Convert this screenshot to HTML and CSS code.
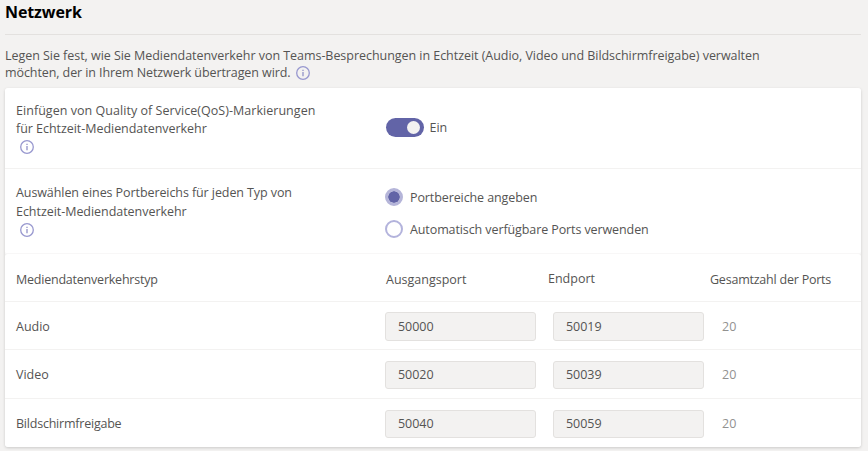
FILE: index.html
```html
<!DOCTYPE html>
<html lang="de">
<head>
<meta charset="utf-8">
<title>Netzwerk</title>
<link rel="stylesheet" href="styles.css">
</head>
<body>
<svg class="defs" width="0" height="0" aria-hidden="true">
  <symbol id="info" viewBox="0 0 14 14">
    <circle cx="7" cy="7" r="6.3" fill="none" stroke="#9898cf" stroke-width="1.3"/>
    <path d="M7 6.1v4.2M7 3.7v1.4" stroke="#9292c8" stroke-width="1.3"/>
  </symbol>
</svg>
<main class="page">
  <h1 class="title">Netzwerk</h1>
  <p class="intro"><span class="intro-first">Legen Sie fest, wie Sie Mediendatenverkehr von Teams-Besprechungen in Echtzeit (Audio, Video und Bildschirmfreigabe) verwalten</span><br><span class="snug">möchten, der in Ihrem Netzwerk übertragen wird.</span><svg class="info info-inline"><use href="#info"/></svg></p>
  <div class="cards">
    <section class="card">
      <div class="setting qos">
        <div class="label"><span class="loose">Einfügen von Quality of Service(QoS)-Markierungen</span><br><span class="intro-first">für Echtzeit-Mediendatenverkehr</span><svg class="info"><use href="#info"/></svg></div>
        <div class="switch-line"><span class="switch"><span class="knob"></span></span><span>Ein</span></div>
      </div>
      <div class="setting ports">
        <div class="label"><span class="snug">Auswählen eines Portbereichs für jeden Typ von</span><br><span class="intro-first">Echtzeit-Mediendatenverkehr</span><svg class="info"><use href="#info"/></svg></div>
        <div class="radios">
          <div class="radio"><span class="dot checked"></span><span>Portbereiche angeben</span></div>
          <div class="radio"><span class="dot"></span><span>Automatisch verfügbare Ports verwenden</span></div>
        </div>
      </div>
    </section>
    <section class="card table">
      <div class="row head"><span class="tight">Mediendatenverkehrstyp</span><span>Ausgangsport</span><span class="end">Endport</span><span class="tight">Gesamtzahl der Ports</span></div>
      <div class="row"><span>Audio</span><span class="field">50000</span><span class="field second">50019</span><span class="total">20</span></div>
      <div class="row"><span>Video</span><span class="field">50020</span><span class="field second">50039</span><span class="total">20</span></div>
      <div class="row"><span class="tight">Bildschirmfreigabe</span><span class="field">50040</span><span class="field second">50059</span><span class="total">20</span></div>
    </section>
  </div>
</main>
</body>
</html>
```
FILE: styles.css
```css
* { box-sizing: border-box; }
body {
  margin: 0;
  height: 451px;
  overflow: hidden;
  background: #f3f2f1;
  color: #555453;
  font: 12.5px/18px "Open Sans", "Noto Sans", sans-serif;
  white-space: nowrap;
}
.defs { position: absolute; }
.page { padding: 0 7px 0 5px; }
.title {
  margin: 0;
  height: 35px;
  border-bottom: 1px solid #e3e1df;
  color: #000;
  font-size: 16px;
  line-height: 24px;
  font-weight: 700;
  letter-spacing: -.1px;
}
.intro { margin: 0; height: 53px; padding-top: 12px; line-height: 17px; }
.intro-first { letter-spacing: -.042px; }
.snug { letter-spacing: -.085px; }
.loose { letter-spacing: .04px; }
.tight { letter-spacing: -.22px; }
.info { display: block; width: 14px; height: 14px; margin: 2px 0 0 4px; }
.info-inline { display: inline-block; vertical-align: -3px; margin: 0 0 0 5px; }
.cards { box-shadow: 0 1px 3px rgba(0, 0, 0, .17); border-radius: 3px; }
.card { background: #fff; border-radius: 3px; }
.setting { display: grid; grid-template-columns: 370px 1fr; padding-left: 11px; }
.qos { height: 81px; padding-top: 14px; border-bottom: 1px solid #f3f2f1; }
.ports { height: 85px; padding-top: 14px; border-bottom: 1px solid #f8f7f7; line-height: 19px; }
.ports .info { margin-top: 2px; }
.switch-line { display: flex; align-items: center; gap: 6px; height: 19px; margin: 16px 0 0 -.5px; }
.switch {
  display: flex; align-items: center; justify-content: flex-end;
  width: 38px; height: 19px; padding-right: 4px;
  background: #6264a7; border-radius: 10px;
}
.knob { width: 13px; height: 13px; border-radius: 50%; background: #f3f2f1; }
.radios { display: grid; grid-template-rows: 32px 32px; margin: -2px 0 0 -1px; letter-spacing: -.1px; }
.radio { display: flex; align-items: center; gap: 7px; }
.dot { width: 18px; height: 18px; border: 2px solid #b3b3dc; border-radius: 50%; }
.dot.checked { background: #6264a7; border: 3px solid #b5b5d9; background-clip: padding-box; }
.row {
  display: grid;
  grid-template-columns: 370px 162px 162px 1fr;
  align-items: center;
  height: 49px;
  padding: 2px 0 0 11px;
  border-bottom: 1px solid #f3f2f1;
}
.row:last-child { height: 48px; border-bottom: 0; }
.row:nth-child(2) { height: 48px; }
.head { height: 48px; padding-top: 4px; }
.end { margin-top: -2px; }
.field {
  width: 151px; height: 28px; margin-left: -1px; padding-left: 12px;
  border: 1px solid #e3e1df; border-radius: 3px;
  background: #f3f2f1; line-height: 26px; letter-spacing: -.05px;
}
.row:nth-child(2) .field { height: 29px; line-height: 27px; }
.second { margin-left: 5px; }
.total { padding-left: 12px; color: #929190; }
```
